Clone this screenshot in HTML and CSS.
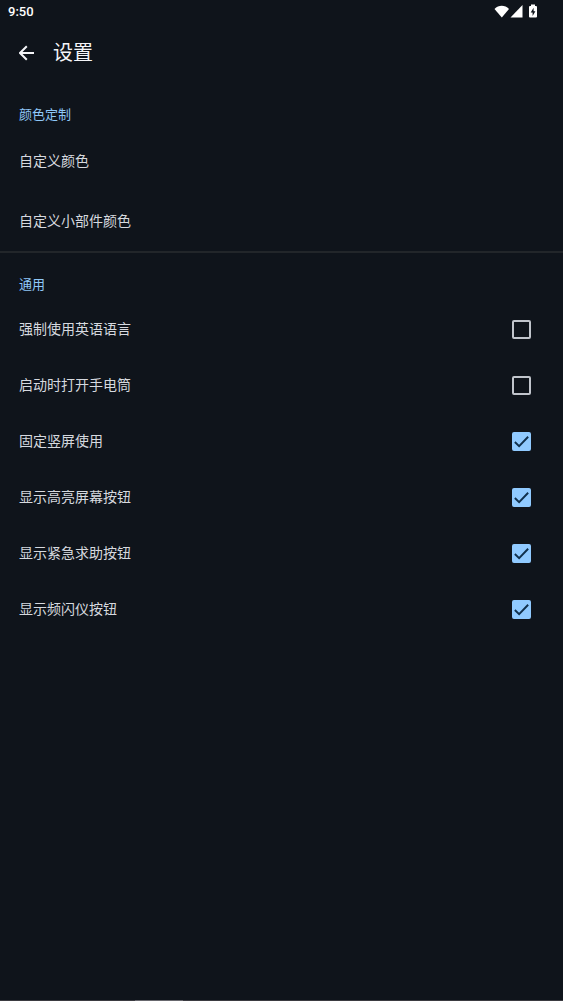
FILE: index.html
```html
<!DOCTYPE html>
<html lang="zh-CN">
<head>
<meta charset="utf-8">
<meta name="viewport" content="width=device-width, initial-scale=1">
<title>设置</title>
<link rel="stylesheet" href="styles.css">
</head>
<body>
<div class="status">
  <span class="clock">9:50</span>
  <svg class="status-icons" width="44" height="16" viewBox="0 0 44 16" fill="currentColor" aria-hidden="true">
    <path d="M0.5 5C4.500 0.800 11 0.800 15 5L7.800 13.500Z"/>
    <path d="M28.500 1V13.500H16.500Z"/>
    <path fill-rule="evenodd" d="M37 0.500H41V2H42Q43 2 43 3V12.500Q43 13.500 42 13.500H36Q35 13.500 35 12.500V3Q35 2 36 2H37ZM39.600 3.800L36.700 8.500H38.600V12L41.400 7.300H39.600Z"/>
  </svg>
</div>
<header class="bar">
  <button class="back" type="button" aria-label="返回">
    <svg width="16" height="16" viewBox="0 0 16 16" fill="none" stroke="currentColor" stroke-width="2" aria-hidden="true"><path d="M15 8H1.500M7.800 1.200L1 8L7.800 14.800"/></svg>
  </button>
  <h1 class="title">设置</h1>
</header>
<main class="main">
  <section class="group colors">
    <h2 class="heading">颜色定制</h2>
    <button class="item" type="button">自定义颜色</button>
    <button class="item" type="button">自定义小部件颜色</button>
  </section>
  <section class="group general">
    <h2 class="heading">通用</h2>
    <label class="option">强制使用英语语言<span class="box"><input class="check" type="checkbox"><svg class="tick" viewBox="0 0 20 20" aria-hidden="true"><path d="M3 10.500L7.500 15L17 5"/></svg></span></label>
    <label class="option">启动时打开手电筒<span class="box"><input class="check" type="checkbox"><svg class="tick" viewBox="0 0 20 20" aria-hidden="true"><path d="M3 10.500L7.500 15L17 5"/></svg></span></label>
    <label class="option">固定竖屏使用<span class="box"><input class="check" type="checkbox" checked><svg class="tick" viewBox="0 0 20 20" aria-hidden="true"><path d="M3 10.500L7.500 15L17 5"/></svg></span></label>
    <label class="option">显示高亮屏幕按钮<span class="box"><input class="check" type="checkbox" checked><svg class="tick" viewBox="0 0 20 20" aria-hidden="true"><path d="M3 10.500L7.500 15L17 5"/></svg></span></label>
    <label class="option">显示紧急求助按钮<span class="box"><input class="check" type="checkbox" checked><svg class="tick" viewBox="0 0 20 20" aria-hidden="true"><path d="M3 10.500L7.500 15L17 5"/></svg></span></label>
    <label class="option">显示频闪仪按钮<span class="box"><input class="check" type="checkbox" checked><svg class="tick" viewBox="0 0 20 20" aria-hidden="true"><path d="M3 10.500L7.500 15L17 5"/></svg></span></label>
  </section>
</main>
<div class="edge"><div class="handle"></div></div>
</body>
</html>
```
FILE: styles.css
```css
* { box-sizing: border-box; }
body {
  margin: 0;
  min-height: 100vh;
  display: flex;
  flex-direction: column;
  background: #0f141b;
  color: #d6d9df;
  font: 14px/20px Roboto, "Noto Sans CJK SC", sans-serif;
}
button {
  border: 0;
  padding: 0;
  background: none;
  color: inherit;
  font: inherit;
  text-align: left;
}
.status {
  display: flex;
  align-items: center;
  justify-content: space-between;
  height: 24px;
  padding: 0 25px 0 8px;
  color: #fff;
}
.clock { font-size: 13px; font-weight: 500; }
.bar {
  display: flex;
  align-items: center;
  gap: 18px;
  height: 57px;
  padding: 0 19px;
  color: #f4f5f8;
}
.back { display: flex; }
.title { margin: 0; font-size: 20px; font-weight: 400; line-height: 28px; }
.main { flex: 1; }
.group { display: flex; flex-direction: column; }
.colors { padding-top: 20px; border-bottom: 2px solid #22262a; }
.general { padding-top: 18px; }
.heading {
  margin: 0 0 2px;
  padding: 4px 19px;
  color: #8fc8f8;
  font-size: 13px;
  font-weight: 400;
}
.item { height: 60px; padding: 0 19px; }
.option {
  display: flex;
  align-items: center;
  justify-content: space-between;
  height: 56px;
  padding: 0 32px 0 19px;
}
.general .option { margin-bottom: 0; }
.box { display: grid; }
.check, .tick { grid-area: 1 / 1; width: 19px; height: 19px; }
.check {
  appearance: none;
  margin: 0;
  border: 2px solid #c1c5cc;
  border-radius: 2px;
}
.check:checked { border-color: #90caff; background: #90caff; }
.tick {
  visibility: hidden;
  pointer-events: none;
  fill: none;
  stroke: #10304c;
  stroke-width: 2;
}
.check:checked + .tick { visibility: visible; }
.edge { height: 1px; padding-left: 24%; background: #3b3b41; }
.handle { width: 48px; height: 1px; background: #68686e; }
```
